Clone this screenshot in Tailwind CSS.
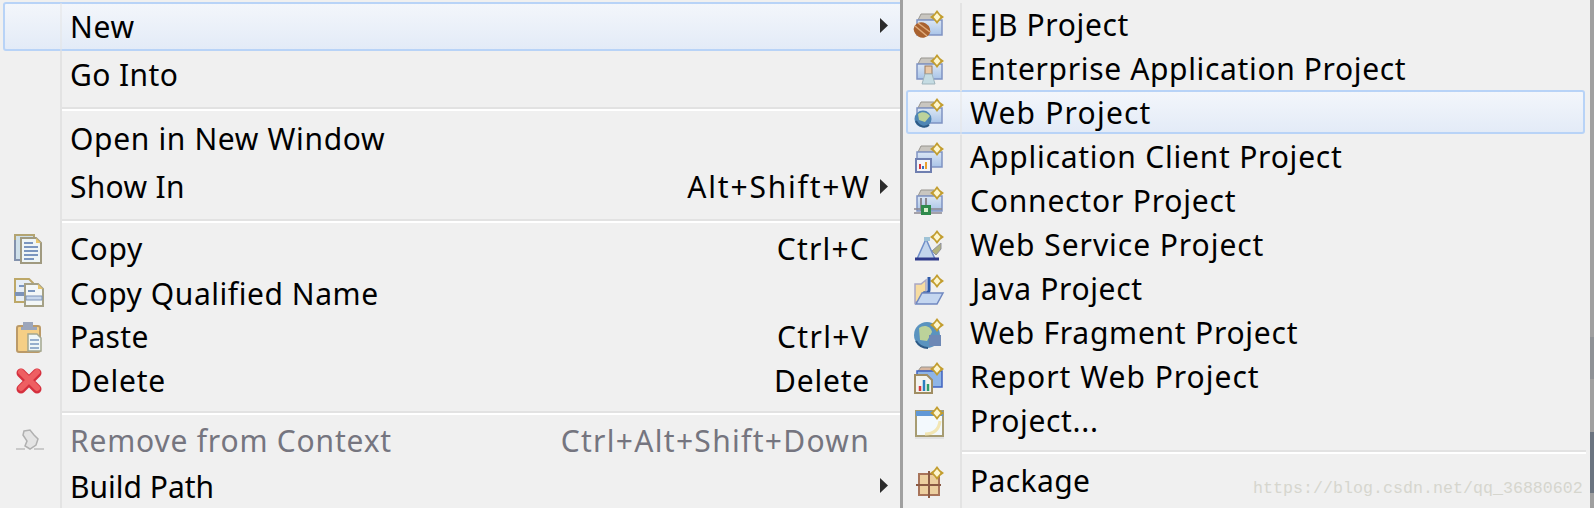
<!DOCTYPE html>
<html lang="en">
<head>
<meta charset="UTF-8" />
<title>Context menu</title>
<script src="https://cdn.jsdelivr.net/npm/@tailwindcss/browser@4"></script>
</head>
<body class="bg-[#f0f0f0] text-black font-['Noto_Sans',sans-serif] text-[30px] tracking-[0.65px] overflow-hidden">
<svg width="0" height="0" class="absolute">
  <defs>
    <linearGradient id="blue" x1="0" y1="0" x2="0" y2="1"><stop offset="0" stop-color="#dbe6f4"/><stop offset="1" stop-color="#a9c4e8"/></linearGradient>
    <symbol id="spark" viewBox="0 0 36 36">
      <path d="M27 3 L30 7 L34 10 L30 13 L27 17 L24 13 L20 10 L24 7Z" fill="#c29d2e"/>
      <path d="M27 6 L30.500 10 L27 14 L23.500 10Z" fill="#fdf6cf"/>
    </symbol>
    <symbol id="proj" viewBox="0 0 36 36">
      <path d="M8 13 L11 7 L24 7 L26 13Z" fill="#c9c6c0" stroke="#98958f"/>
      <path d="M7 13 H32 V28 H7Z" fill="url(#blue)" stroke="#7f92c2" stroke-width="1.500"/>
    </symbol>
  </defs>
</svg>

<div class="flex h-[508px] w-[1594px]">
  <!-- left menu -->
  <div class="relative flex w-[900px] shrink-0 flex-col overflow-hidden">
    <div class="absolute left-[3px] top-[2px] h-[49px] w-[910px] rounded-[3px] border-2 border-[#b8d3f7] bg-gradient-to-b from-[#f3f6fb] to-[#e3ebf7]"></div>

    <div class="relative flex h-[51px] shrink-0 pt-[3px]"><div class="w-[62px] shrink-0 border-r-2 border-[#e3e3e3]/50"></div><span class="ml-[8px] flex-1 leading-[47px]">New</span><svg class="mr-[12px] mt-[15px] h-[15px] w-[8px]" viewBox="0 0 8 15"><path d="M0 0 L8 7.500 L0 15Z" fill="#2b2b2b"/></svg></div>
    <div class="flex h-[48px] shrink-0"><div class="w-[62px] shrink-0 border-r-2 border-[#e3e3e3]"></div><span class="ml-[8px] leading-[47px] tracking-[0.4px]">Go Into</span></div>

    <div class="flex h-[16px] shrink-0"><div class="w-[62px] shrink-0 border-r-2 border-[#e3e3e3]"></div><div class="mt-[8px] h-[4px] flex-1 border-t-2 border-b-2 border-t-[#e2e2e2] border-b-white"></div></div>

    <div class="flex h-[48px] shrink-0"><div class="w-[62px] shrink-0 border-r-2 border-[#e3e3e3]"></div><span class="ml-[8px] leading-[47px]">Open in New Window</span></div>
    <div class="flex h-[48px] shrink-0"><div class="w-[62px] shrink-0 border-r-2 border-[#e3e3e3]"></div><span class="ml-[8px] flex-1 leading-[47px] tracking-[0.3px]">Show In</span><span class="leading-[47px] tracking-[1.8px]">Alt+Shift+W</span><svg class="ml-[9px] mr-[12px] mt-[16px] h-[15px] w-[8px]" viewBox="0 0 8 15"><path d="M0 0 L8 7.500 L0 15Z" fill="#2b2b2b"/></svg></div>

    <div class="flex h-[17px] shrink-0"><div class="w-[62px] shrink-0 border-r-2 border-[#e3e3e3]"></div><div class="mt-[8px] h-[4px] flex-1 border-t-2 border-b-2 border-t-[#e2e2e2] border-b-white"></div></div>

    <div class="flex h-[44px] shrink-0 items-center">
      <div class="flex h-full w-[62px] shrink-0 items-center border-r-2 border-[#e3e3e3] pl-[10px]">
        <svg class="h-9 w-9" viewBox="0 0 36 36">
          <rect x="5" y="3" width="19" height="25" fill="#cfe0ea" stroke="#b3a472" stroke-width="2"/>
          <path d="M5 8 V28 H10" fill="none" stroke="#8392ad" stroke-width="2"/>
          <path d="M11 6 H26 L31 11 V31 H11Z" fill="#eef5f6" stroke="#a09a80" stroke-width="2"/>
          <path d="M26 6 V11 H31Z" fill="#e6c56d"/>
          <path d="M14 11 H23 M14 15 H28 M14 19 H28 M14 23 H28 M14 27 H24" stroke="#7a96bf" stroke-width="2"/>
        </svg>
      </div>
      <span class="ml-[8px] flex-1 -translate-y-[2px]">Copy</span><span class="mr-[30px] -translate-y-[2px] tracking-[1.2px]">Ctrl+C</span>
    </div>
    <div class="flex h-[44px] shrink-0 items-center">
      <div class="flex h-full w-[62px] shrink-0 items-center border-r-2 border-[#e3e3e3] pl-[10px]">
        <svg class="h-9 w-9" viewBox="0 0 36 36">
          <path d="M5 3 H19 L23 7 V26 H5Z" fill="#e6eef6" stroke="#bda868" stroke-width="2"/>
          <path d="M5 16 H23 V20 H5Z" fill="#7c93b9"/>
          <path d="M9 10 H19" stroke="#7a96bf" stroke-width="2"/>
          <path d="M15 8 H28 L33 13 V30 H15Z" fill="#f3f7f7" stroke="#a5a186" stroke-width="2"/>
          <path d="M28 8 V13 H33Z" fill="#e6c56d"/>
          <path d="M18 15 H25" stroke="#7a96bf" stroke-width="2"/>
          <path d="M16 20 H32 V24 H16Z" fill="#c7d7ec" stroke="#7c93b9" stroke-width="1"/>
        </svg>
      </div>
      <span class="ml-[8px] -translate-y-[1px] tracking-[0.55px]">Copy Qualified Name</span>
    </div>
    <div class="flex h-[44px] shrink-0 items-center">
      <div class="flex h-full w-[62px] shrink-0 items-center border-r-2 border-[#e3e3e3] pl-[10px]">
        <svg class="h-9 w-9" viewBox="0 0 36 36">
          <rect x="7" y="6" width="23" height="26" rx="2" fill="#f5cf85" stroke="#bb9a68" stroke-width="2"/>
          <path d="M11 7 H13 V2 H23 V7 H27 V10 H11Z" fill="#9ca6bb"/>
          <path d="M18 14 H27 L31 18 V31 H18Z" fill="#eff6f7" stroke="#a3a68f" stroke-width="1.500"/>
          <path d="M20 20 H29 M20 24 H29 M20 28 H29" stroke="#7a96bf" stroke-width="1.500"/>
        </svg>
      </div>
      <span class="ml-[8px] flex-1 -translate-y-[2px] tracking-[0.3px]">Paste</span><span class="mr-[30px] -translate-y-[2px] tracking-[1.3px]">Ctrl+V</span>
    </div>
    <div class="flex h-[44px] shrink-0 items-center">
      <div class="flex h-full w-[62px] shrink-0 items-center border-r-2 border-[#e3e3e3] pl-[10px]">
        <svg class="h-9 w-9" viewBox="0 0 36 36">
          <path d="M11 8 L27 24 M27 8 L11 24" stroke="#d5303e" stroke-width="9" stroke-linecap="round" transform="translate(0 1)"/>
          <path d="M11 8 L27 24 M27 8 L11 24" stroke="#ee5f62" stroke-width="6" stroke-linecap="round"/>
        </svg>
      </div>
      <span class="ml-[8px] flex-1 -translate-y-[2px] tracking-[0.8px]">Delete</span><span class="mr-[30px] -translate-y-[2px] tracking-[0.8px]">Delete</span>
    </div>

    <div class="flex h-[15px] shrink-0"><div class="w-[62px] shrink-0 border-r-2 border-[#e3e3e3]"></div><div class="mt-[7px] h-[4px] flex-1 border-t-2 border-b-2 border-t-[#e2e2e2] border-b-white"></div></div>

    <div class="flex h-[44px] shrink-0 items-center">
      <div class="flex h-full w-[62px] shrink-0 items-center border-r-2 border-[#e3e3e3] pl-[10px]">
        <svg class="h-9 w-9" viewBox="0 0 36 36">
          <path d="M14 8 L20 7 L24 12 L28 16 L26 22 L20 26 L15 23 L17 18 L13 12Z" fill="#e4e4e4" stroke="#b0b0b0" stroke-width="1.500"/>
          <path d="M6 26 H15 M24 26 H34" stroke="#bdbdbd" stroke-width="1.500"/>
        </svg>
      </div>
      <span class="ml-[8px] flex-1 -translate-y-px tracking-[0.8px] text-[#75757f]">Remove from Context</span><span class="mr-[30px] -translate-y-px tracking-[1.3px] text-[#75757f]">Ctrl+Alt+Shift+Down</span>
    </div>
    <div class="flex h-[45px] shrink-0 items-center">
      <div class="h-full w-[62px] shrink-0 border-r-2 border-[#e3e3e3]"></div>
      <span class="ml-[8px] flex-1 translate-y-px tracking-normal">Build Path</span><svg class="mr-[12px] h-[15px] w-[8px]" viewBox="0 0 8 15"><path d="M0 0 L8 7.500 L0 15Z" fill="#2b2b2b"/></svg>
    </div>
  </div>

  <!-- submenu -->
  <div class="relative flex w-[690px] shrink-0 flex-col overflow-hidden border-l-[3px] border-[#a0a0a0]">
    <div class="absolute left-[3px] top-[90px] h-[44px] w-[679px] rounded-[3px] border-2 border-[#b8d3f7] bg-gradient-to-b from-[#f3f6fb] to-[#e3ebf7]"></div>

    <div class="relative flex h-[47px] shrink-0 items-center pt-[3px]">
      <div class="flex h-full w-[59px] shrink-0 items-center border-r-2 border-[#e3e3e3] pl-[7px]">
        <svg class="h-9 w-9" viewBox="0 0 36 36">
          <use href="#proj"/><use href="#spark"/>
          <ellipse cx="12" cy="23" rx="8.500" ry="7.500" fill="#a9622f" transform="rotate(30 12 23)"/>
          <path d="M5 19 L17 29 M8 16 L20 25" stroke="#e0ac7c" stroke-width="1.500"/>
        </svg>
      </div>
      <span class="ml-[8px] -translate-y-px">EJB Project</span>
    </div>
    <div class="relative flex h-[44px] shrink-0 items-center">
      <div class="flex h-full w-[59px] shrink-0 items-center border-r-2 border-[#e3e3e3] pl-[7px]">
        <svg class="h-9 w-9" viewBox="0 0 36 36">
          <use href="#proj"/><use href="#spark"/>
          <rect x="15" y="15" width="7" height="8" fill="#e9c9a8" stroke="#9a7a5f"/>
          <path d="M15 23 H22 L25 33 H12Z" fill="#c5dce3" stroke="#9fb4bb"/>
        </svg>
      </div>
      <span class="ml-[8px] -translate-y-px">Enterprise Application Project</span>
    </div>
    <div class="relative flex h-[44px] shrink-0 items-center">
      <div class="flex h-full w-[59px] shrink-0 items-center border-r-2 border-[#e3e3e3]/50 pl-[7px]">
        <svg class="h-9 w-9" viewBox="0 0 36 36">
          <use href="#proj"/><use href="#spark"/>
          <circle cx="13" cy="24" r="8.500" fill="#4f86b5"/>
          <path d="M8 19 C12 16 17 17 20 21 L15 27 L9 25Z" fill="#bcd29a"/>
          <path d="M6 26 C9 32 15 33 19 30" stroke="#2d5a86" stroke-width="2" fill="none"/>
        </svg>
      </div>
      <span class="ml-[8px] -translate-y-px tracking-[1.2px]">Web Project</span>
    </div>
    <div class="relative flex h-[44px] shrink-0 items-center">
      <div class="flex h-full w-[59px] shrink-0 items-center border-r-2 border-[#e3e3e3] pl-[7px]">
        <svg class="h-9 w-9" viewBox="0 0 36 36">
          <use href="#proj"/><use href="#spark"/>
          <rect x="6" y="20" width="15" height="13" fill="#f4f4f8" stroke="#6f7fb0" stroke-width="2"/>
          <path d="M10 25 V30" stroke="#d8353b" stroke-width="2"/>
          <path d="M13 27 V30" stroke="#3a6fc0" stroke-width="2"/>
          <path d="M16 23 V30" stroke="#e8a030" stroke-width="2"/>
        </svg>
      </div>
      <span class="ml-[8px] -translate-y-px tracking-[0.78px]">Application Client Project</span>
    </div>
    <div class="flex h-[44px] shrink-0 items-center">
      <div class="flex h-full w-[59px] shrink-0 items-center border-r-2 border-[#e3e3e3] pl-[7px]">
        <svg class="h-9 w-9" viewBox="0 0 36 36">
          <use href="#proj"/><use href="#spark"/>
          <path d="M11 15 V28 M16 15 V28" stroke="#8b8790" stroke-width="2"/>
          <path d="M4 26 H32 M4 30 H32" stroke="#8b8790" stroke-width="1.500"/>
          <rect x="11" y="22" width="10" height="10" fill="#2f8a4c"/>
          <rect x="14" y="25" width="4" height="4" fill="#d5efcb"/>
        </svg>
      </div>
      <span class="ml-[8px] -translate-y-px tracking-[0.8px]">Connector Project</span>
    </div>
    <div class="flex h-[44px] shrink-0 items-center">
      <div class="flex h-full w-[59px] shrink-0 items-center border-r-2 border-[#e3e3e3] pl-[7px]">
        <svg class="h-9 w-9" viewBox="0 0 36 36">
          <use href="#spark"/>
          <path d="M16 12 L25 32 H7Z" fill="#c3d5ec" stroke="#6f8ec8" stroke-width="1.500"/>
          <path d="M14 10 H20 V14 H14Z" fill="#9fc3d6"/>
          <path d="M22 24 L31 16 L31 22 L26 28Z" fill="#b2b27c" stroke="#8e8f9c"/>
          <path d="M5 32 H29" stroke="#2f3a8a" stroke-width="3"/>
        </svg>
      </div>
      <span class="ml-[8px] -translate-y-px tracking-[0.95px]">Web Service Project</span>
    </div>
    <div class="flex h-[44px] shrink-0 items-center">
      <div class="flex h-full w-[59px] shrink-0 items-center border-r-2 border-[#e3e3e3] pl-[7px]">
        <svg class="h-9 w-9" viewBox="0 0 36 36">
          <use href="#spark"/>
          <path d="M5 13 H11 L16 9 V24 L5 32Z" fill="#f7dca0" stroke="#a9a6c4" stroke-width="1.500"/>
          <path d="M19 6 V19 C19 22 15 23 13 21" stroke="#2f5aa8" stroke-width="3" fill="none"/>
          <path d="M12 22 H33 L27 33 H6Z" fill="#c4d6f0" stroke="#7088c0" stroke-width="1.500"/>
        </svg>
      </div>
      <span class="ml-[10px] -translate-y-px">Java Project</span>
    </div>
    <div class="flex h-[44px] shrink-0 items-center">
      <div class="flex h-full w-[59px] shrink-0 items-center border-r-2 border-[#e3e3e3] pl-[7px]">
        <svg class="h-9 w-9" viewBox="0 0 36 36">
          <circle cx="17" cy="20" r="13" fill="#5a93bf"/>
          <path d="M9 13 C14 9 21 11 22 17 L17 26 L10 25Z" fill="#bcd29a"/>
          <path d="M19 20 H31 V31 H19Z" fill="#6d88b5"/>
          <path d="M6 26 C9 31 14 33 18 33" stroke="#2d5a86" stroke-width="2" fill="none"/>
          <use href="#spark"/>
        </svg>
      </div>
      <span class="ml-[8px] -translate-y-px tracking-[0.75px]">Web Fragment Project</span>
    </div>
    <div class="flex h-[44px] shrink-0 items-center">
      <div class="flex h-full w-[59px] shrink-0 items-center border-r-2 border-[#e3e3e3] pl-[7px]">
        <svg class="h-9 w-9" viewBox="0 0 36 36">
          <path d="M8 12 L11 8 H24 L26 12Z" fill="#d8b7a0" stroke="#98958f"/>
          <path d="M7 12 H32 V28 H7Z" fill="#8fb5e6" stroke="#3f62c0" stroke-width="1.500"/>
          <use href="#spark"/>
          <path d="M5 16 H17 L22 21 V34 H5Z" fill="#f3f3ee" stroke="#a08d62" stroke-width="2"/>
          <path d="M10 27 V32" stroke="#d8353b" stroke-width="2.500"/>
          <path d="M14 21 V32" stroke="#2a7fc0" stroke-width="2.500"/>
          <path d="M18 25 V32" stroke="#2e9c6a" stroke-width="2.500"/>
        </svg>
      </div>
      <span class="ml-[8px] -translate-y-px tracking-[1px]">Report Web Project</span>
    </div>
    <div class="flex h-[44px] shrink-0 items-center">
      <div class="flex h-full w-[59px] shrink-0 items-center border-r-2 border-[#e3e3e3] pl-[7px]">
        <svg class="h-9 w-9" viewBox="0 0 36 36">
          <rect x="6" y="8" width="27" height="25" fill="#f3f9fd" stroke="#a79c72" stroke-width="2"/>
          <rect x="6" y="8" width="27" height="5" fill="#5f97d6"/>
          <path d="M30 18 C29 26 25 31 15 31" stroke="#f2e6b4" stroke-width="3" fill="none"/>
          <path d="M5 35 H34" stroke="#dcdcdc" stroke-width="1.500"/>
          <use href="#spark"/>
        </svg>
      </div>
      <span class="ml-[8px] -translate-y-px">Project...</span>
    </div>

    <div class="flex h-[16px] shrink-0"><div class="w-[59px] shrink-0 border-r-2 border-[#e3e3e3]"></div><div class="mr-[4px] mt-[7px] h-[4px] flex-1 border-t-2 border-b-2 border-t-[#e2e2e2] border-b-white"></div></div>

    <div class="flex h-[44px] shrink-0 items-center">
      <div class="flex h-full w-[59px] shrink-0 items-center border-r-2 border-[#e3e3e3] pl-[7px]">
        <svg class="h-9 w-9" viewBox="0 0 36 36">
          <rect x="9" y="11" width="20" height="21" fill="#eccf9f" stroke="#a8745a" stroke-width="2"/>
          <path d="M19 8 V35 M6 22 H31" stroke="#8a5a44" stroke-width="2"/>
          <use href="#spark"/>
        </svg>
      </div>
      <span class="ml-[8px] -translate-y-px tracking-[0.4px]">Package</span>
    </div>
    <div class="flex flex-1"><div class="w-[59px] shrink-0 border-r-2 border-[#e3e3e3]"></div></div>
  </div>

  <!-- window edge behind the menu -->
  <div class="flex w-[4px] shrink-0 flex-col bg-[#a0a0a0]">
    <div class="mt-[337px] h-[42px] bg-[#8f9296]"></div>
    <div class="mt-[53px] h-[61px] bg-[#6b7480]"></div>
  </div>
</div>

<!-- blog watermark -->
<div class="absolute left-[1253px] top-[476px] font-['Liberation_Mono',monospace] text-[16.67px] tracking-normal text-[#d6d6ce]">https://blog.csdn.net/qq_36880602</div>
</body>
</html>
